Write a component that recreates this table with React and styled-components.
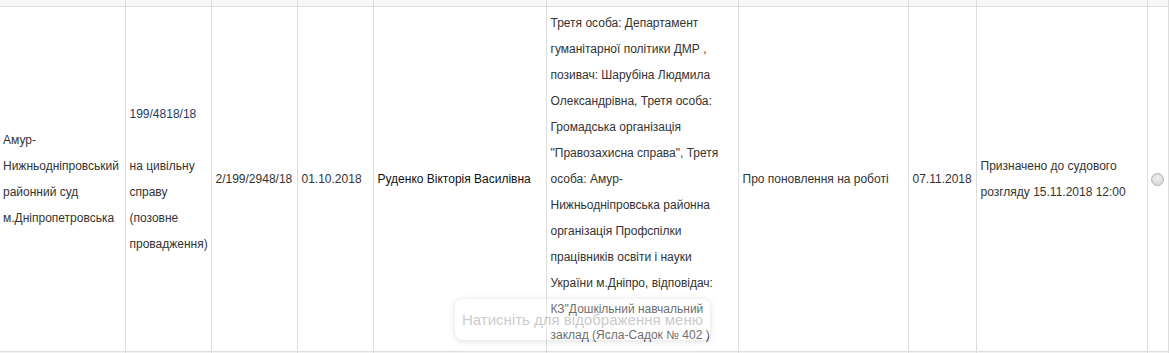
import React from 'react';
import styled, { createGlobalStyle } from 'styled-components';

const GlobalStyle = createGlobalStyle`
    body {
        margin: 0;
        background: #fff;
        font-family: "Liberation Sans", Arial, sans-serif;
        overflow: hidden;
    }
`;

const Page = styled.div`
    position: relative;
    width: 1169px;
    height: 353px;
    overflow: hidden;
`;

const Table = styled.table`
    border-collapse: collapse;
    table-layout: fixed;
    width: 1168px;
    font-size: 12px;
    line-height: 26px;
    color: #333;
`;

const HeadCell = styled.th`
    height: 6px;
    padding: 0;
    background: #f7f7f7;
    border-right: 1px solid #ddd;
    border-bottom: 1px solid #ddd;
`;

const Cell = styled.td`
    padding: 3px ${(props) => props.$padRight || '4px'} 3px ${(props) => props.$padLeft || '4px'};
    vertical-align: middle;
    border-right: 1px solid #ddd;
    border-bottom: 1px solid #ddd;
    color: ${(props) => props.$color || '#333'};
    white-space: normal;
`;

const NextCell = styled.td`
    height: 20px;
    background: #f2f2f2;
    border-right: 1px solid #ddd;
`;

const CaseLink = styled.span`
    color: #1f3a5f;
`;

const Radio = styled.span`
    display: block;
    width: 11px;
    height: 11px;
    margin: 0 auto;
    border-radius: 50%;
    border: 1px solid #b4b4b4;
    background: radial-gradient(circle at 50% 40%, #f0f0f0 0%, #dadada 70%, #cfcfcf 100%);
`;

const Hint = styled.div`
    position: absolute;
    left: 455px;
    top: 299px;
    width: 255px;
    height: 41px;
    box-sizing: border-box;
    display: flex;
    align-items: center;
    justify-content: center;
    background: #fff;
    border-radius: 8px;
    box-shadow: 0 1px 6px rgba(0, 0, 0, 0.45);
    color: #444;
    font-size: 15px;
    opacity: 0.28;
    pointer-events: none;
`;

const widths = [125, 86, 86, 76, 173, 192, 170, 68, 171, 21];

const App = () => {
    return (
        <Page>
            <GlobalStyle />
            <Table>
                <colgroup>
                    {widths.map((w, i) => (
                        <col key={i} style={{ width: w }} />
                    ))}
                </colgroup>
                <thead>
                    <tr>
                        {widths.map((w, i) => (
                            <HeadCell key={i} />
                        ))}
                    </tr>
                </thead>
                <tbody>
                    <tr>
                        <Cell $padLeft="3px">Амур-Нижньодніпровський районний суд м.Дніпропетровська</Cell>
                        <Cell>
                            <CaseLink>199/4818/18</CaseLink>
                            <br />
                            <br />
                            на цивільну справу (позовне провадження)
                        </Cell>
                        <Cell>2/199/2948/18</Cell>
                        <Cell>01.10.2018</Cell>
                        <Cell $color="#111">Руденко Вікторія Василівна</Cell>
                        <Cell $padRight="10px">
                            Третя особа: Департамент гуманітарної політики ДМР , позивач: Шарубіна Людмила
                            Олександрівна, Третя особа: Громадська організація "Правозахисна справа", Третя
                            особа: Амур-Нижньодніпровська районна організація Профспілки працівників освіти і
                            науки України м.Дніпро, відповідач: КЗ"Дошкільний навчальний заклад (Ясла-Садок № 402 )
                        </Cell>
                        <Cell>Про поновлення на роботі</Cell>
                        <Cell>07.11.2018</Cell>
                        <Cell>Призначено до судового розгляду 15.11.2018 12:00</Cell>
                        <Cell $padLeft="0" $padRight="0">
                            <Radio />
                        </Cell>
                    </tr>
                    <tr>
                        {widths.map((w, i) => (
                            <NextCell key={i} />
                        ))}
                    </tr>
                </tbody>
            </Table>
            <Hint>Натисніть для відображення меню</Hint>
        </Page>
    );
};

export default App;
